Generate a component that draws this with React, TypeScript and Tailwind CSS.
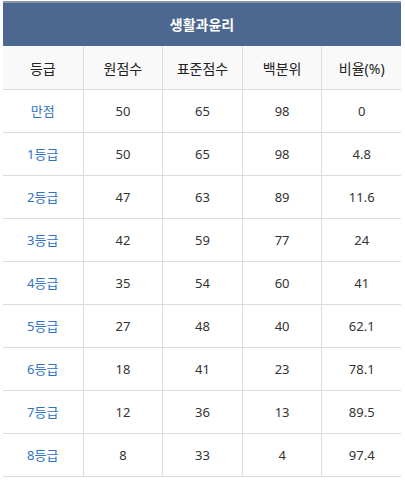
const rows = [
  ["만점", "50", "65", "98", "0"],
  ["1등급", "50", "65", "98", "4.8"],
  ["2등급", "47", "63", "89", "11.6"],
  ["3등급", "42", "59", "77", "24"],
  ["4등급", "35", "54", "60", "41"],
  ["5등급", "27", "48", "40", "62.1"],
  ["6등급", "18", "41", "23", "78.1"],
  ["7등급", "12", "36", "13", "89.5"],
  ["8등급", "8", "33", "4", "97.4"],
];

const heads = ["등급", "원점수", "표준점수", "백분위", "비율(%)"];

export default function App() {
  return (
    <div
      className="w-[405px] h-[483px] bg-white pt-px px-[3px]"
      style={{ fontFamily: '"Noto Sans", "Noto Sans CJK KR", sans-serif' }}
    >
      <div className="w-[398px]">
        <div className="h-[45px] border-t-2 border-[#8a96a8] bg-[#4d6890] flex items-center justify-center text-white text-[14px] font-bold">
          생활과윤리
        </div>

        <div className="grid grid-cols-5 h-[44px] bg-[#f9f9f9] border-b border-[#dcdcdc]">
          {heads.map((h, i) => (
            <div
              key={h}
              className={`flex items-center justify-center pt-px text-[14px] text-[#222] ${i > 0 ? "border-l border-[#dcdcdc]" : ""}`}
            >
              {h}
            </div>
          ))}
        </div>

        {rows.map((r) => (
          <div key={r[0]} className="grid grid-cols-5 h-[43px] border-b border-[#dcdcdc]">
            {r.map((c, i) => (
              <div
                key={i}
                className={`flex items-center justify-center pt-[2px] text-[13px] ${
                  i === 0 ? "text-[#2f72c4]" : "text-[#333] border-l border-[#dcdcdc]"
                }`}
              >
                {c}
              </div>
            ))}
          </div>
        ))}
      </div>
    </div>
  );
}
